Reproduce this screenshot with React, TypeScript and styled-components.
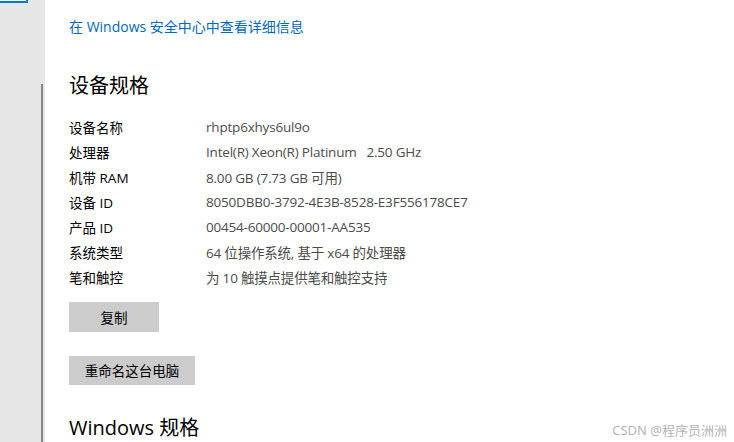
import React from 'react';
import styled, { createGlobalStyle } from 'styled-components';

const GlobalStyle = createGlobalStyle`
  html, body {
    margin: 0;
    padding: 0;
    background: #ffffff;
    overflow: hidden;
  }
  body {
    font-family: "Open Sans", "Noto Sans CJK SC", sans-serif;
  }
`;

// Whole settings window
const Window = styled.div`
  display: flex;
  width: 734px;
  height: 442px;
  position: relative;
  overflow: hidden;
  background: #ffffff;
`;

// Grey navigation strip on the left
const Sidebar = styled.div`
  width: 45px;
  flex-shrink: 0;
  background: #e6e6e6;
  display: flex;
  flex-direction: column;
`;

const FocusEdge = styled.div`
  width: 26px;
  height: 1px;
  background: #ffffff;
  border-right: 2px solid #0078d7;
  border-bottom: 2px solid #0078d7;
`;

const ScrollThumb = styled.div`
  flex: 1;
  width: 2px;
  margin-top: 81px;
  margin-right: 2px;
  align-self: flex-end;
  background: #858585;
`;

const Content = styled.div`
  flex: 1;
  padding: 17px 0 0 24px;
  display: flex;
  flex-direction: column;
  align-items: flex-start;
`;

const Link = styled.a`
  font-size: 14px;
  line-height: 20px;
  color: #0067c0;
  text-decoration: none;
  cursor: pointer;
`;

const SectionTitle = styled.h2<{ $gap: number }>`
  margin: ${p => p.$gap}px 0 0 0;
  font-size: 20px;
  font-weight: 400;
  line-height: 28px;
  color: #000000;
`;

const SpecList = styled.div`
  margin-top: 14px;
  display: grid;
  grid-template-columns: 137px auto;
  grid-auto-rows: 25px;
  align-items: center;
  font-size: 13.5px;
`;

const Label = styled.div`
  color: #000000;
  white-space: nowrap;
`;

const Value = styled.div`
  color: #4c4c4c;
  white-space: pre;
  letter-spacing: -0.2px;
`;

const Button = styled.button<{ $width: number; $gap: number }>`
  margin-top: ${p => p.$gap}px;
  width: ${p => p.$width}px;
  height: 31px;
  border: none;
  background: #cccccc;
  color: #000000;
  font-family: "Open Sans", "Noto Sans CJK SC", sans-serif;
  font-size: 13.5px;
  padding: 0;
  cursor: pointer;
`;

const Watermark = styled.div`
  position: absolute;
  right: 7px;
  bottom: 3px;
  font-size: 13px;
  color: #b4b4b4;
  font-family: "Noto Sans", "Noto Sans CJK SC", sans-serif;
`;

const specs: [string, string][] = [
  ['设备名称', 'rhptp6xhys6ul9o'],
  ['处理器', 'Intel(R) Xeon(R) Platinum   2.50 GHz'],
  ['机带 RAM', '8.00 GB (7.73 GB 可用)'],
  ['设备 ID', '8050DBB0-3792-4E3B-8528-E3F556178CE7'],
  ['产品 ID', '00454-60000-00001-AA535'],
  ['系统类型', '64 位操作系统, 基于 x64 的处理器'],
  ['笔和触控', '为 10 触摸点提供笔和触控支持'],
];

const App: React.FC = () => {
  return (
    <Window>
      <GlobalStyle />
      <Sidebar>
        <FocusEdge />
        <ScrollThumb />
      </Sidebar>
      <Content>
        <Link>在 Windows 安全中心中查看详细信息</Link>
        <SectionTitle $gap={35}>设备规格</SectionTitle>
        <SpecList>
          {specs.map(([label, value]) => (
            <React.Fragment key={label}>
              <Label>{label}</Label>
              <Value>{value}</Value>
            </React.Fragment>
          ))}
        </SpecList>
        <Button $width={90} $gap={13}>复制</Button>
        <Button $width={126} $gap={24}>重命名这台电脑</Button>
        <SectionTitle $gap={29}>Windows 规格</SectionTitle>
      </Content>
      <Watermark>CSDN @程序员洲洲</Watermark>
    </Window>
  );
};

export default App;
